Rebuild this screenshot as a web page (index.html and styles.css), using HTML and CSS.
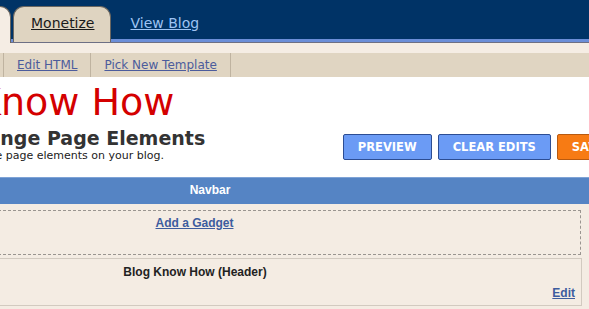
FILE: index.html
```html
<!DOCTYPE html>
<html lang="en">
<head>
    <meta charset="UTF-8" />
    <title>Blogger: Layout - Page Elements</title>
    <link rel="stylesheet" href="styles.css">
</head>
<body>

    <div class="topbar">
        <a class="tab tab-active" href="#">Layout</a>
        <a class="tab" href="#">Monetize</a>
        <a class="tab-link" href="#">View Blog</a>
    </div>
    <div class="band"></div>
    <div class="subnav">
        <a href="#">Edit HTML</a>
        <a href="#">Pick New Template</a>
    </div>

    <div class="page">
        <div class="head">
            <div class="head-text">
                <h1 class="blog-title">Blog Know How</h1>
                <h2 class="page-title">Arrange Page Elements</h2>
                <p class="page-desc">Click and drag to rearrange page elements on your blog.</p>
            </div>
            <div class="actions">
                <button class="btn">PREVIEW</button>
                <button class="btn">CLEAR EDITS</button>
                <button class="btn btn-save">SAVE</button>
            </div>
        </div>

        <div class="navbar">Navbar</div>

        <div class="section">
            <div class="add-gadget"><a href="#">Add a Gadget</a></div>
            <div class="widget">
                <div class="widget-title">Blog Know How (Header)</div>
                <div class="widget-edit"><a href="#">Edit</a></div>
            </div>
        </div>
    </div>

</body>
</html>
```

FILE: styles.css
```css
body { margin: 0; background: #f4ece3; overflow: hidden; font-family: "DejaVu Sans", Verdana, sans-serif; }

.topbar { height: 39px; background: #003366; border-bottom: 3px solid #6b8ed8; display: flex; align-items: flex-end; }
.tab { display: block; height: 29px; padding: 6px 16px 0 17px; margin-bottom: -3px; margin-left: 2px; background: #dfd4c1; border: 1px solid #6a6660; border-bottom: none; border-radius: 11px 11px 0 0; color: #1a1a1a; font-size: 14px; line-height: 20px; }
.tab-active { width: 60px; margin-left: -84px; height: 30px; margin-bottom: -4px; background: #f5ede4; }
.tab-link { margin: 0 0 6px 19px; color: #9ec3f3; font-size: 14px; line-height: 20px; }

.band { height: 10px; background: #f5ede4; border-top: 1px solid #6d6f84; }
.subnav { height: 24px; background: #e0d5c2; display: flex; padding-left: 3px; }
.subnav a { border-left: 1px solid #bfb3a0; padding: 0 13px; color: #4c5c9c; font-size: 12px; line-height: 24px; }
.subnav a:last-child { border-right: 1px solid #bfb3a0; }

.page { margin-left: -192px; width: 812px; }
.head { height: 100px; background: #fff; display: flex; justify-content: space-between; }
.blog-title { margin: 5px 0 0 72px; font-size: 38px; line-height: 40px; font-weight: normal; color: #d40000; white-space: nowrap; }
.page-title { margin: 5px 0 0 146px; font-size: 19px; line-height: 22px; font-weight: bold; color: #333; white-space: nowrap; }
.page-desc { margin: 0 0 0 43px; font-size: 11px; line-height: 13px; color: #222; white-space: nowrap; }

.actions { align-self: flex-end; margin-bottom: 17px; display: flex; gap: 6px; }
.btn { height: 26px; padding: 0 14px; background: #6b9bf5; border: 1px solid #2c4d93; border-radius: 2px; color: #fff; font-family: "DejaVu Sans", Verdana, sans-serif; font-weight: bold; font-size: 11.5px; }
.btn-save { background: #f77b14; border-color: #b85a10; }

.navbar { height: 26px; padding-right: 8px; background: #5584c4; border-top: 1px solid #7ea3d6; color: #fff; text-align: center; font: bold 12px/24px "Liberation Sans", Arial, sans-serif; }

.section { padding: 6px 39px 0 0; font-family: "Liberation Sans", Arial, sans-serif; }
.section a { color: #3d5c9e; font-weight: bold; font-size: 12px; }
.add-gadget { height: 42px; border: 1px dashed #9a9590; text-align: center; line-height: 20px; padding-top: 1px; }
.widget { margin-top: 3px; margin-right: -1px; height: 46px; border: 1px solid #d2cac0; }
.widget-title { text-align: center; font-weight: bold; font-size: 12px; color: #222; padding-top: 6px; line-height: 15px; }
.widget-edit { text-align: right; padding: 4px 6px 0 0; line-height: 15px; }
```
